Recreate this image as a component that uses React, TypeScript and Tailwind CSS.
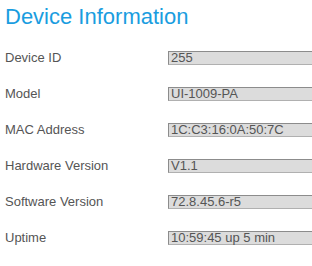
const rows = [
  { label: "Device ID", value: "255" },
  { label: "Model", value: "UI-1009-PA" },
  { label: "MAC Address", value: "1C:C3:16:0A:50:7C" },
  { label: "Hardware Version", value: "V1.1" },
  { label: "Software Version", value: "72.8.45.6-r5" },
  { label: "Uptime", value: "10:59:45 up 5 min" },
];

export default function App() {
  return (
    <div className="w-[312px] h-[266px] overflow-hidden bg-white pl-[5px] font-['Liberation_Sans',Arial,sans-serif]">
      <h1 className="mt-[4px] text-[22px] leading-[25px] text-[#1a9de0]">Device Information</h1>
      <div className="mt-[11px]">
        {rows.map((r) => (
          <div key={r.label} className="flex items-center h-[36px]">
            <span className="w-[163px] shrink-0 text-[13px] text-[#555]">{r.label}</span>
            <div className="w-[170px] shrink-0 h-[14px] bg-[#dcdcdc] border border-t-[#8c8c8c] border-l-[#8c8c8c] border-r-[#c0c0c0] border-b-[#b0b0b0] pl-[2px] text-[13px] leading-[12px] text-[#555]">
              {r.value}
            </div>
          </div>
        ))}
      </div>
    </div>
  );
}
